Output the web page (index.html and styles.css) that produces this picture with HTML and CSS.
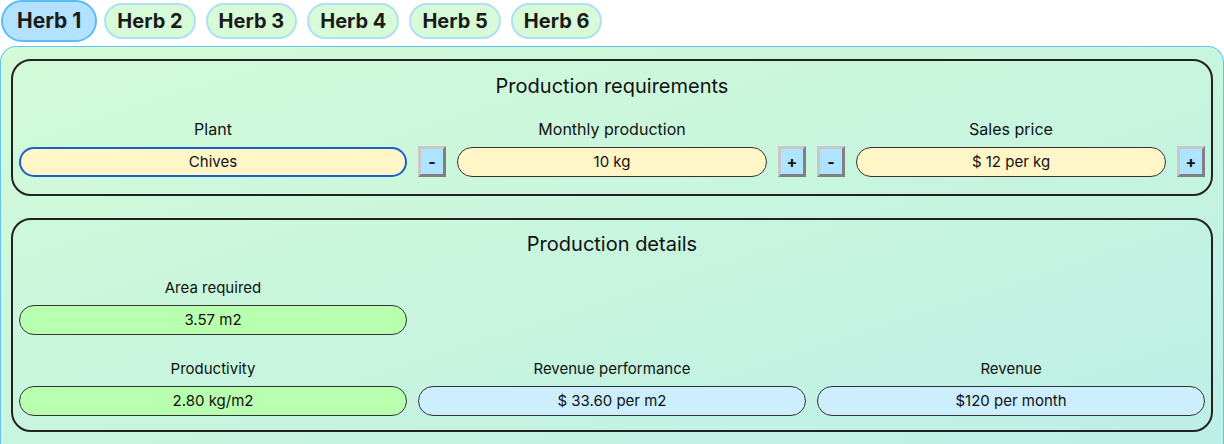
FILE: index.html
```html
<!DOCTYPE html>
<html lang="en">
<head>
  <meta charset="UTF-8">
  <title>Herb production</title>
  <link rel="stylesheet" href="styles.css">
</head>
<body>

<div class="tabs">
  <button class="tab active">Herb 1</button>
  <button class="tab">Herb 2</button>
  <button class="tab">Herb 3</button>
  <button class="tab">Herb 4</button>
  <button class="tab">Herb 5</button>
  <button class="tab">Herb 6</button>
</div>

<div class="panel">
  <div class="section">
    <h2>Production requirements</h2>
    <div class="grid">
      <div class="field">
        <label>Plant</label>
        <div class="row">
          <div class="box yellow focused">Chives</div>
        </div>
      </div>
      <div class="field">
        <label>Monthly production</label>
        <div class="row">
          <button class="step">-</button>
          <div class="box yellow">10 kg</div>
          <button class="step">+</button>
        </div>
      </div>
      <div class="field">
        <label>Sales price</label>
        <div class="row">
          <button class="step">-</button>
          <div class="box yellow">$ 12 per kg</div>
          <button class="step">+</button>
        </div>
      </div>
    </div>
  </div>

  <div class="section second">
    <h2>Production details</h2>
    <div class="grid">
      <div class="field">
        <label>Area required</label>
        <div class="box green">3.57 m2</div>
      </div>
    </div>
    <div class="grid lower">
      <div class="field">
        <label>Productivity</label>
        <div class="box green">2.80 kg/m2</div>
      </div>
      <div class="field">
        <label>Revenue performance</label>
        <div class="box blue">$ 33.60 per m2</div>
      </div>
      <div class="field">
        <label>Revenue</label>
        <div class="box blue">$120 per month</div>
      </div>
    </div>
  </div>
</div>

</body>
</html>
```

FILE: styles.css
```css
body {
  margin: 0;
  font-family: Inter, "Liberation Sans", sans-serif;
  color: #111;
  height: 444px;
  overflow: hidden;
}

.tabs {
  display: flex;
  align-items: center;
  height: 42px;
  padding-left: 1px;
  gap: 10px;
  margin-bottom: 4px;
}

.tab {
  font-family: inherit;
  font-weight: 700;
  font-size: 20px;
  line-height: 24px;
  height: 36px;
  padding: 0 11px;
  border: 2px solid #b0e0f5;
  border-radius: 18px;
  background: #d6fbd6;
  color: #1a1a1a;
}

.tab.active {
  font-size: 21px;
  height: 42px;
  padding: 0 14px;
  border-color: #5cbcf5;
  border-radius: 21px;
  background: #b2e2ff;
  margin-right: -3px;
}

.panel {
  box-sizing: border-box;
  height: 398px;
  border: 1px solid #66c2f0;
  border-bottom: none;
  border-radius: 16px 16px 0 0;
  padding: 12px 10px 0;
  background: linear-gradient(to bottom right, #d3fbd7 0%, #c8f5de 50%, #bcefe7 100%);
}

.section {
  border: 2px solid #222;
  border-radius: 20px;
  padding: 12px 6px 17px;
}

.section.second {
  margin-top: 22px;
  padding: 11px 6px 14px;
}

h2 {
  margin: 0;
  font-size: 20px;
  font-weight: 400;
  line-height: 26px;
  text-align: center;
}

.grid {
  display: grid;
  grid-template-columns: 1fr 1fr 1fr;
  gap: 11px;
  margin-top: 20px;
}

.section.second .grid {
  margin-top: 21px;
}

.section.second .grid.lower {
  margin-top: 24px;
}

.field {
  display: flex;
  flex-direction: column;
  align-items: stretch;
}

.field label {
  font-size: 16px;
  line-height: 20px;
  text-align: center;
  margin-bottom: 7px;
}

.section.second .field label {
  font-size: 15px;
}

.row {
  display: flex;
  align-items: center;
  gap: 11px;
  height: 31px;
}

.box {
  flex: 1;
  box-sizing: border-box;
  height: 30px;
  border: 1px solid #333;
  border-radius: 15px;
  font-size: 15px;
  line-height: 28px;
  text-align: center;
}

.yellow {
  background: #fff6c8;
}

.green {
  background: #b8ffb0;
}

.blue {
  background: #cdeefd;
}

.focused {
  border: 2px solid #1a5fcc;
  line-height: 26px;
}

.step {
  box-sizing: border-box;
  width: 28px;
  height: 31px;
  padding: 0;
  font-family: inherit;
  font-size: 16px;
  font-weight: 700;
  background: #aee4ff;
  border: 3px solid;
  border-color: #c8c8c8 #808080 #808080 #c8c8c8;
  color: #111;
}
```
